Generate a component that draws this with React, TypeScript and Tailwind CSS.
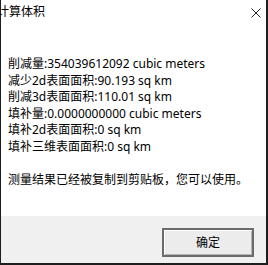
const lines = [
  "削减量:354039612092 cubic meters",
  "减少2d表面面积:90.193 sq km",
  "削减3d表面面积:110.01 sq km",
  "填补量:0.0000000000 cubic meters",
  "填补2d表面面积:0 sq km",
  "填补三维表面面积:0 sq km",
];

const App = () => {
  return (
    <div className="w-[268px] h-[265px] bg-white flex flex-col border-l border-r-2 border-b-2 border-[#1e1e1e] text-black text-[12px] font-['Noto_Sans','Noto_Sans_CJK_SC',sans-serif] overflow-hidden">
      {/* Title bar */}
      <div className="h-[24px] flex items-center justify-between flex-shrink-0">
        <span className="-ml-[4px] leading-none">计算体积</span>
        <svg width="10" height="10" viewBox="0 0 10 10" className="mr-[5px] mt-[1px]">
          <path d="M0.5 0.5L9.5 9.5M9.5 0.5L0.5 9.5" stroke="#222" strokeWidth="1" />
        </svg>
      </div>

      {/* Message */}
      <div className="flex-1 pt-[32px] pl-[7px] leading-[16.6px] whitespace-nowrap">
        {lines.map((l) => (
          <div key={l}>{l}</div>
        ))}
        <div className="h-[16.6px]" />
        <div>测量结果已经被复制到剪贴板，您可以使用。</div>
      </div>

      {/* Footer */}
      <div className="h-[47px] flex-shrink-0 bg-[#f0f0f0] flex justify-end items-start pt-[12px] pr-[12px]">
        <button className="w-[92px] h-[29px] border-2 border-[#6b6b6b] bg-[#ececec] shadow-[inset_1px_1px_0_#fff,inset_-1px_-1px_0_#b5b5b5] text-[12px] leading-none">
          确定
        </button>
      </div>
    </div>
  );
};

export default App;
